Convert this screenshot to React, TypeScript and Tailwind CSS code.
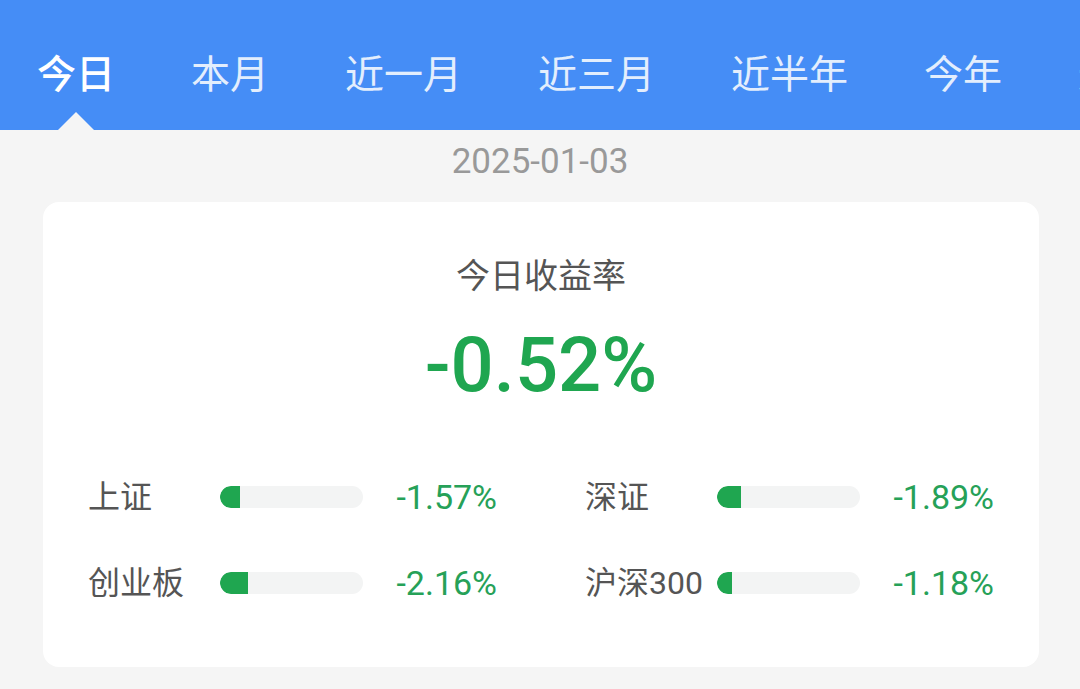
import React from 'react';

const tabs = ['今日', '本月', '近一月', '近三月', '近半年', '今年', '近一年'];

const indices = [
  { name: '上证', value: '-1.57%', fill: 20 },
  { name: '深证', value: '-1.89%', fill: 24 },
  { name: '创业板', value: '-2.16%', fill: 28 },
  { name: '沪深300', value: '-1.18%', fill: 15 },
];

const font = { fontFamily: 'Roboto, "Noto Sans CJK SC", sans-serif' };

export default function App() {
  return (
    <div className="w-[1080px] h-[689px] overflow-hidden bg-[#f5f5f5]" style={font}>
      {/* Tabs */}
      <div className="h-[130px] bg-[#458df6] pl-[37px] pt-[52px] flex gap-[76px] whitespace-nowrap overflow-hidden">
        {tabs.map((t, i) => (
          <div
            key={t}
            className={
              'relative h-[78px] text-[39px] leading-[46px] ' +
              (i === 0 ? 'text-white font-medium' : 'text-[#e3eefd]')
            }
          >
            {t}
            {i === 0 && (
              <div className="absolute bottom-0 left-1/2 -translate-x-1/2 w-0 h-0 border-l-[18px] border-r-[18px] border-b-[18px] border-l-transparent border-r-transparent border-b-[#f5f5f5]" />
            )}
          </div>
        ))}
      </div>

      {/* Date */}
      <div className="h-[72px] pb-[8px] flex items-center justify-center text-[35px] leading-[36px] text-[#999999]">
        2025-01-03
      </div>

      {/* Card */}
      <div className="mx-[43px] w-[996px] bg-white rounded-[16px] pt-[54px] pb-[62px] px-[45px]">
        <div className="text-center text-[34px] leading-[40px] text-[#555555]">今日收益率</div>
        <div className="mt-[29px] text-center text-[76px] leading-[80px] font-medium text-[#1fa650]">-0.52%</div>

        <div className="mt-[70px] grid grid-cols-2 gap-x-[88px] gap-y-[42px]">
          {indices.map((it) => (
            <div key={it.name} className="flex items-center h-[44px]">
              <div className="w-[132px] text-[32px] leading-[44px] text-[#555555] whitespace-nowrap">{it.name}</div>
              <div className="w-[143px] h-[22px] rounded-full bg-[#f3f4f4] overflow-hidden">
                <div className="h-full bg-[#1fa650] rounded-l-full" style={{ width: it.fill }} />
              </div>
              <div className="flex-1 text-right text-[34px] leading-[44px] text-[#26a158]">{it.value}</div>
            </div>
          ))}
        </div>
      </div>
    </div>
  );
}
